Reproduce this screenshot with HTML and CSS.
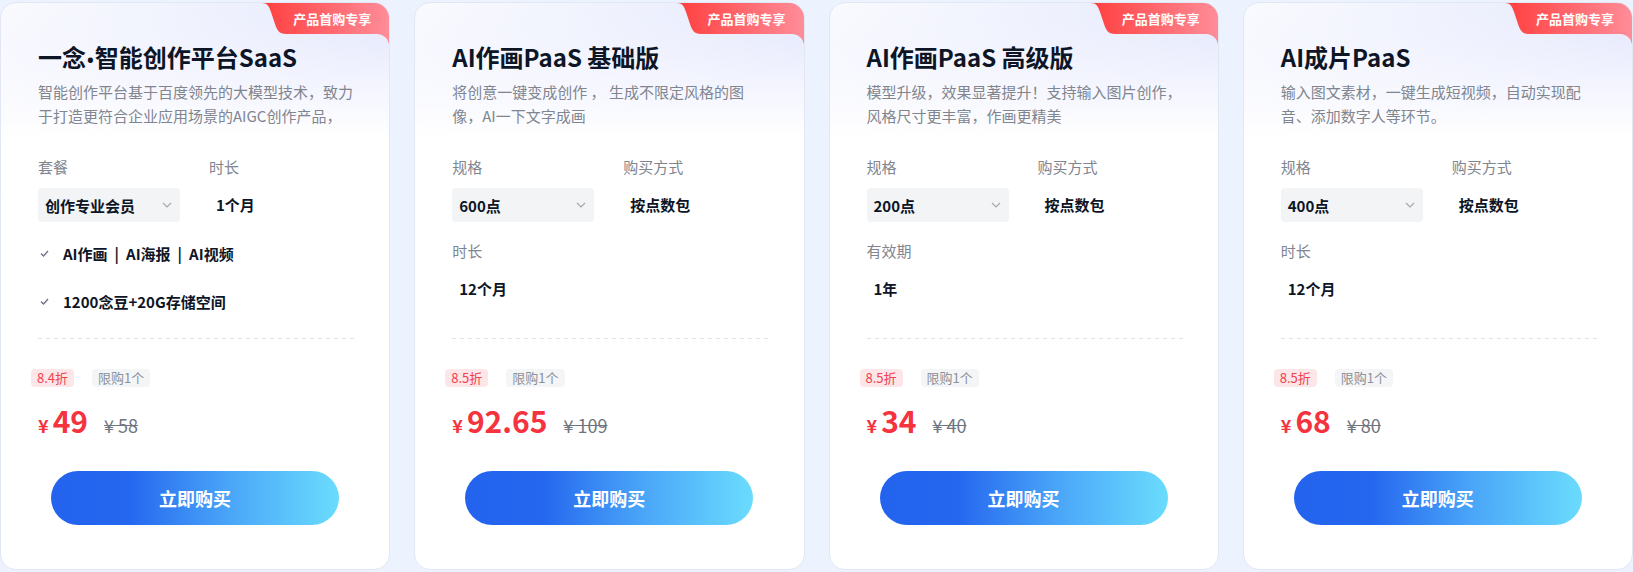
FILE: index.html
```html
<!DOCTYPE html>
<html lang="zh-CN">
<head>
<meta charset="utf-8">
<title>产品套餐</title>
<link rel="stylesheet" href="styles.css">
</head>
<body>
<div class="wrap">

  <div class="card">
    <svg class="ribbon" viewBox="0 0 127 44" width="127" height="44"><defs><linearGradient id="rg1" x1="0" y1="0" x2="1" y2="0"><stop offset="0" stop-color="#ff3f3f"/><stop offset="1" stop-color="#ff8d99"/></linearGradient></defs><path d="M0,0 H127 V43 A12,12 0 0 0 115,31 H24 C17,31 15,27 13,21 L9,9 C7,3 5,0 0,0 Z" fill="url(#rg1)"/></svg>
    <span class="ribbon-text">产品首购专享</span>
    <h2 class="title">一念<span class="dot">•</span>智能创作平台SaaS</h2>
    <p class="desc">智能创作平台基于百度领先的大模型技术，致力于打造更符合企业应用场景的AIGC创作产品，</p>
    <div class="opts">
      <div class="grid">
        <div class="field"><div class="label">套餐</div><div class="select"><span>创作专业会员</span><svg class="chev" width="10" height="6" viewBox="0 0 10 6"><path d="M1 1 L5 5 L9 1" fill="none" stroke="#a3a8b1" stroke-width="1.2"/></svg></div></div>
        <div class="field"><div class="label">时长</div><div class="value">1个月</div></div>
      </div>
      <ul class="feats">
        <li><svg class="check" width="9" height="7" viewBox="0 0 9 7"><path d="M1 3.5 L3.5 6 L8 1" fill="none" stroke="#6b7280" stroke-width="1.3"/></svg>AI作画<span class="sep">|</span>AI海报<span class="sep">|</span>AI视频</li>
        <li><svg class="check" width="9" height="7" viewBox="0 0 9 7"><path d="M1 3.5 L3.5 6 L8 1" fill="none" stroke="#6b7280" stroke-width="1.3"/></svg>1200念豆+20G存储空间</li>
      </ul>
    </div>
    <div class="divider"></div>
    <div class="tags"><span class="tag tag-off">8.4折</span><span class="tag tag-limit">限购1个</span></div>
    <div class="price"><span class="yen">¥</span><span class="num">49</span><span class="orig">¥ 58</span></div>
    <button class="buy">立即购买</button>
  </div>

  <div class="card">
    <svg class="ribbon" viewBox="0 0 127 44" width="127" height="44"><defs><linearGradient id="rg2" x1="0" y1="0" x2="1" y2="0"><stop offset="0" stop-color="#ff3f3f"/><stop offset="1" stop-color="#ff8d99"/></linearGradient></defs><path d="M0,0 H127 V43 A12,12 0 0 0 115,31 H24 C17,31 15,27 13,21 L9,9 C7,3 5,0 0,0 Z" fill="url(#rg2)"/></svg>
    <span class="ribbon-text">产品首购专享</span>
    <h2 class="title">AI作画PaaS 基础版</h2>
    <p class="desc">将创意一键变成创作 ， 生成不限定风格的图像，AI一下文字成画</p>
    <div class="opts">
      <div class="grid">
        <div class="field"><div class="label">规格</div><div class="select"><span>600点</span><svg class="chev" width="10" height="6" viewBox="0 0 10 6"><path d="M1 1 L5 5 L9 1" fill="none" stroke="#a3a8b1" stroke-width="1.2"/></svg></div></div>
        <div class="field"><div class="label">购买方式</div><div class="value">按点数包</div></div>
        <div class="field"><div class="label">时长</div><div class="value">12个月</div></div>
      </div>
    </div>
    <div class="divider"></div>
    <div class="tags"><span class="tag tag-off">8.5折</span><span class="tag tag-limit">限购1个</span></div>
    <div class="price"><span class="yen">¥</span><span class="num">92.65</span><span class="orig">¥ 109</span></div>
    <button class="buy">立即购买</button>
  </div>

  <div class="card">
    <svg class="ribbon" viewBox="0 0 127 44" width="127" height="44"><defs><linearGradient id="rg3" x1="0" y1="0" x2="1" y2="0"><stop offset="0" stop-color="#ff3f3f"/><stop offset="1" stop-color="#ff8d99"/></linearGradient></defs><path d="M0,0 H127 V43 A12,12 0 0 0 115,31 H24 C17,31 15,27 13,21 L9,9 C7,3 5,0 0,0 Z" fill="url(#rg3)"/></svg>
    <span class="ribbon-text">产品首购专享</span>
    <h2 class="title">AI作画PaaS 高级版</h2>
    <p class="desc">模型升级，效果显著提升！支持输入图片创作，风格尺寸更丰富，作画更精美</p>
    <div class="opts">
      <div class="grid">
        <div class="field"><div class="label">规格</div><div class="select"><span>200点</span><svg class="chev" width="10" height="6" viewBox="0 0 10 6"><path d="M1 1 L5 5 L9 1" fill="none" stroke="#a3a8b1" stroke-width="1.2"/></svg></div></div>
        <div class="field"><div class="label">购买方式</div><div class="value">按点数包</div></div>
        <div class="field"><div class="label">有效期</div><div class="value">1年</div></div>
      </div>
    </div>
    <div class="divider"></div>
    <div class="tags"><span class="tag tag-off">8.5折</span><span class="tag tag-limit">限购1个</span></div>
    <div class="price"><span class="yen">¥</span><span class="num">34</span><span class="orig">¥ 40</span></div>
    <button class="buy">立即购买</button>
  </div>

  <div class="card">
    <svg class="ribbon" viewBox="0 0 127 44" width="127" height="44"><defs><linearGradient id="rg4" x1="0" y1="0" x2="1" y2="0"><stop offset="0" stop-color="#ff3f3f"/><stop offset="1" stop-color="#ff8d99"/></linearGradient></defs><path d="M0,0 H127 V43 A12,12 0 0 0 115,31 H24 C17,31 15,27 13,21 L9,9 C7,3 5,0 0,0 Z" fill="url(#rg4)"/></svg>
    <span class="ribbon-text">产品首购专享</span>
    <h2 class="title">AI成片PaaS</h2>
    <p class="desc">输入图文素材，一键生成短视频，自动实现配音、添加数字人等环节。</p>
    <div class="opts">
      <div class="grid">
        <div class="field"><div class="label">规格</div><div class="select"><span>400点</span><svg class="chev" width="10" height="6" viewBox="0 0 10 6"><path d="M1 1 L5 5 L9 1" fill="none" stroke="#a3a8b1" stroke-width="1.2"/></svg></div></div>
        <div class="field"><div class="label">购买方式</div><div class="value">按点数包</div></div>
        <div class="field"><div class="label">时长</div><div class="value">12个月</div></div>
      </div>
    </div>
    <div class="divider"></div>
    <div class="tags"><span class="tag tag-off">8.5折</span><span class="tag tag-limit">限购1个</span></div>
    <div class="price"><span class="yen">¥</span><span class="num">68</span><span class="orig">¥ 80</span></div>
    <button class="buy">立即购买</button>
  </div>

</div>
</body>
</html>
```

FILE: styles.css
```css
html, body {
  margin: 0;
  padding: 0;
}
body {
  background: #edf3fe;
  font-family: "Noto Sans CJK SC", "Noto Sans", sans-serif;
  color: #0d1526;
}
.wrap {
  display: grid;
  grid-template-columns: repeat(4, 1fr);
  gap: 24px;
  padding: 2px 0 0;
}
.card {
  position: relative;
  height: 568px;
  box-sizing: border-box;
  border: 1px solid #e2e8f3;
  border-radius: 16px;
  overflow: hidden;
  background:
    linear-gradient(160deg, rgba(255,255,255,0.85) 0%, rgba(255,255,255,0) 28%),
    linear-gradient(180deg, #dde2fc 0px, #eef0fe 60px, #ffffff 135px);
  display: flex;
  flex-direction: column;
  padding: 38px 34px 44px 37px;
}
.ribbon {
  position: absolute;
  top: 0;
  right: 0;
  display: block;
}
.ribbon-text {
  position: absolute;
  top: 0;
  right: 18px;
  line-height: 31px;
  font-size: 13px;
  font-weight: 700;
  color: #fff;
}
.title {
  margin: 0;
  font-size: 24px;
  line-height: 32px;
  font-weight: 700;
  color: #0d1526;
}
.dot {
  font-family: "Noto Sans", "DejaVu Sans", sans-serif;
  font-size: 18px;
  line-height: 0;
  margin: 0 1px;
}
.desc {
  margin: 7px 0 0;
  font-size: 15px;
  line-height: 24px;
  color: #80858f;
}
.opts {
  margin-top: 28px;
}
.grid {
  display: grid;
  grid-template-columns: 171px 1fr;
  row-gap: 18px;
}
.label {
  font-size: 15px;
  line-height: 22px;
  color: #80858f;
  margin-bottom: 10px;
}
.select {
  width: 142px;
  height: 34px;
  box-sizing: border-box;
  padding: 0 8px 0 7px;
  background: #f2f4f5;
  border-radius: 4px;
  display: flex;
  align-items: center;
  justify-content: space-between;
  font-size: 15px;
  font-weight: 700;
  color: #0d1526;
}
.chev {
  display: block;
}
.value {
  height: 34px;
  line-height: 34px;
  padding-left: 7px;
  font-size: 15px;
  font-weight: 700;
  color: #0d1526;
}
.feats {
  list-style: none;
  margin: 19px 0 0;
  padding: 0;
}
.feats li {
  display: flex;
  align-items: center;
  height: 24px;
  font-size: 15px;
  font-weight: 700;
  color: #0d1526;
  margin-bottom: 24px;
}
.sep {
  margin: 0 7px;
}
.check {
  display: block;
  margin: 1px 14px 0 2px;
}
.divider {
  margin-top: auto;
  height: 1px;
  background: repeating-linear-gradient(90deg, #e1e4ea 0 4px, transparent 4px 8px);
}
.tags {
  margin: 30px 0 0 -7px;
  display: flex;
  gap: 18px;
}
.tag {
  height: 18px;
  line-height: 18px;
  padding: 0 6px;
  border-radius: 4px;
  font-size: 13px;
}
.tag-off {
  background: #fde6e7;
  color: #f0414c;
}
.tag-limit {
  background: #f4f5f7;
  color: #8c9099;
}
.price {
  margin-top: 13px;
  height: 40px;
  display: flex;
  align-items: baseline;
  color: #f5333f;
}
.yen {
  font-size: 18px;
  font-weight: 700;
  margin-right: 4px;
}
.num {
  font-size: 30px;
  line-height: 40px;
  font-weight: 700;
}
.orig {
  margin-left: 16px;
  font-size: 18px;
  color: #6f7580;
  text-decoration: line-through;
}
.buy {
  margin: 31px 0 0 13px;
  width: 288px;
  height: 54px;
  border: none;
  border-radius: 27px;
  background: linear-gradient(90deg, #2363ee 0%, #2567ef 27%, #4aa6f8 62%, #6adcfd 100%);
  color: #fff;
  font-family: inherit;
  font-size: 18px;
  font-weight: 700;
  padding: 0;
}
```
